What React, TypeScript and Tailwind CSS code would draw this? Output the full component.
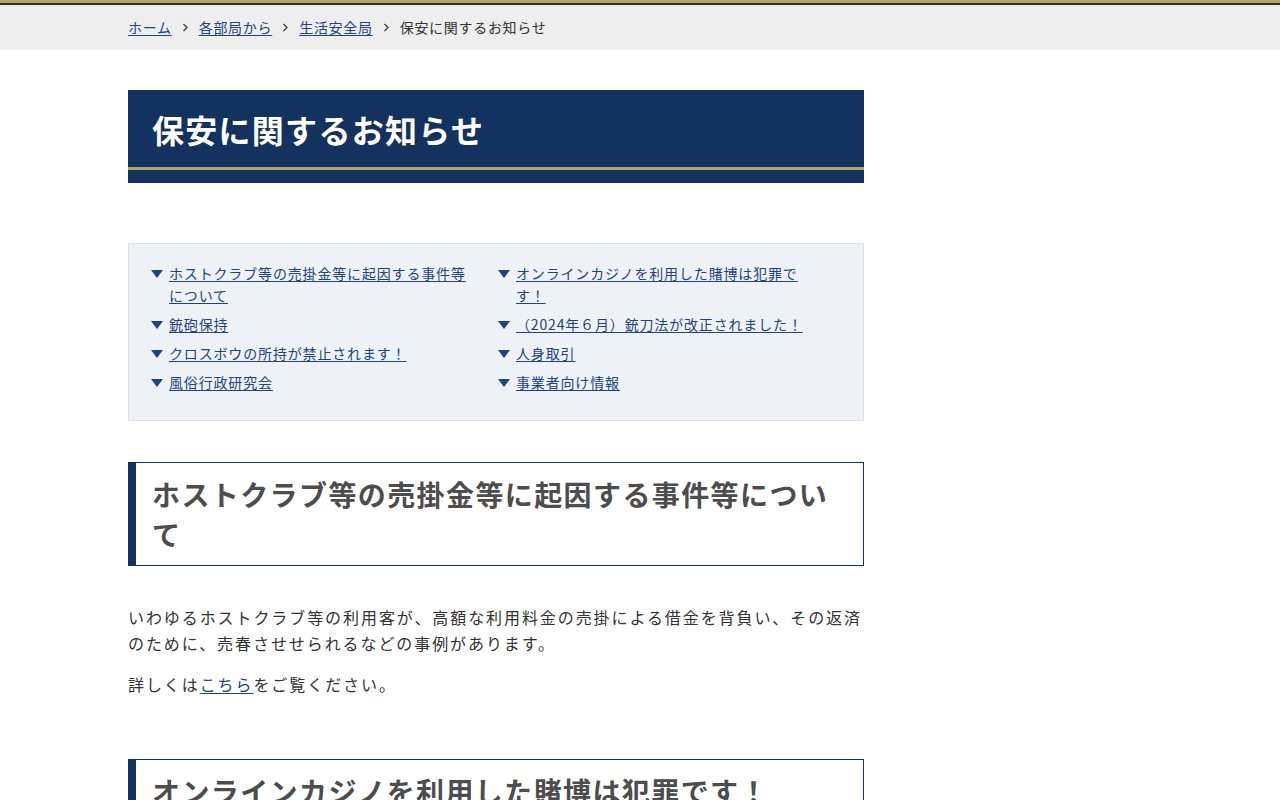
const font = "font-['Noto_Sans_CJK_JP','Noto_Sans',sans-serif]";

const menu = [
  ["ホストクラブ等の売掛金等に起因する事件等について", "オンラインカジノを利用した賭博は犯罪です！"],
  ["銃砲保持", "（2024年６月）銃刀法が改正されました！"],
  ["クロスボウの所持が禁止されます！", "人身取引"],
  ["風俗行政研究会", "事業者向け情報"],
];

function Crumb({ label, last }: { label: string; last?: boolean }) {
  if (last) return <span className="text-[#333]">{label}</span>;
  return (
    <>
      <a href="#" className="text-[#1d4383] underline underline-offset-2">
        {label}
      </a>
      <svg width="7" height="9" viewBox="0 0 7 9" className="mx-[10px]">
        <path d="M1.5 1 L5 4.5 L1.5 8" fill="none" stroke="#444" strokeWidth="1.4" />
      </svg>
    </>
  );
}

function MenuItem({ label }: { label: string }) {
  return (
    <li className="flex items-start pr-[28px] mb-[7px]">
      <span className="mt-[8px] mr-[6px] h-0 w-0 shrink-0 border-x-[6px] border-t-[8px] border-x-transparent border-t-[#1d4383]" />
      <a href="#" className="text-[#1d4383] underline underline-offset-2">
        {label}
      </a>
    </li>
  );
}

function Heading({ children, className = "" }: { children: string; className?: string }) {
  return (
    <h2
      className={`border border-[#13325f] border-l-[8px] pl-[16px] pr-[24px] py-[11px] text-[28px] leading-[40px] font-bold text-[#4d4d4d] tracking-[0.05em] ${className}`}
    >
      {children}
    </h2>
  );
}

export default function App() {
  return (
    <div className={`${font} min-h-screen bg-white text-[#333]`}>
      <div className="h-[3px] bg-[#b3a36b]" />
      <div className="h-[2px] bg-[#2b2b2b]" />
      <nav className="bg-[#eeeeee] h-[45px]">
        <div className="w-[736px] ml-[128px] flex items-center h-full text-[14px] tracking-[0.05em]">
          <Crumb label="ホーム" />
          <Crumb label="各部局から" />
          <Crumb label="生活安全局" />
          <Crumb label="保安に関するお知らせ" last />
        </div>
      </nav>

      <main className="w-[736px] ml-[128px] pt-[40px]">
        <div className="bg-[#13325f]">
          <h1 className="h-[77px] px-[24px] flex items-center text-white text-[32px] font-bold tracking-[0.04em]">
            保安に関するお知らせ
          </h1>
          <div className="h-[3px] bg-[#b3a36b]" />
          <div className="h-[13px]" />
        </div>

        <div className="mt-[60px] bg-[#eef1f6] border border-[#dcdfe3] pl-[22px] pr-[18px] pt-[18px] pb-[20px]">
          <ul className="grid grid-cols-[347px_347px] text-[14px] leading-[22px] tracking-[0.06em]">
            {menu.map(([a, b]) => (
              <>
                <MenuItem key={a} label={a} />
                <MenuItem key={b} label={b} />
              </>
            ))}
          </ul>
        </div>

        <Heading className="mt-[41px]">ホストクラブ等の売掛金等に起因する事件等について</Heading>

        <div className="mt-[38px] text-[16px] leading-[26px] tracking-[0.12em]">
          <p className="mb-[15px]">
            いわゆるホストクラブ等の利用客が、高額な利用料金の売掛による借金を背負い、その返済のために、売春させせられるなどの事例があります。
          </p>
          <p>
            詳しくは
            <a href="#" className="text-[#1d4383] underline underline-offset-2">
              こちら
            </a>
            をご覧ください。
          </p>
        </div>

        <Heading className="mt-[62px]">オンラインカジノを利用した賭博は犯罪です！</Heading>
        <div className="h-[200px]" />
      </main>
    </div>
  );
}
